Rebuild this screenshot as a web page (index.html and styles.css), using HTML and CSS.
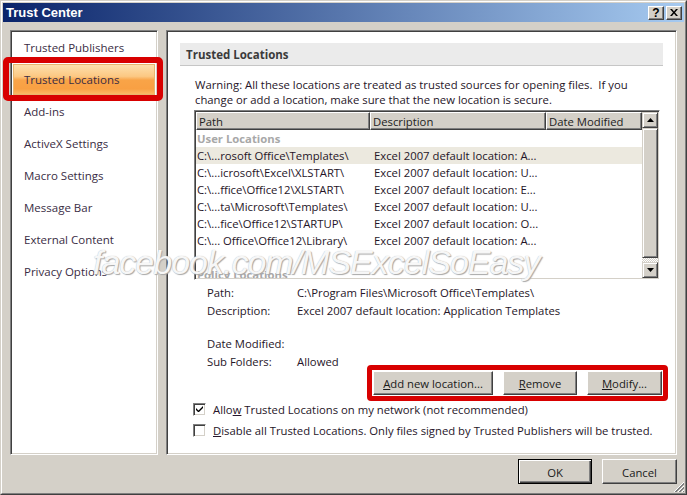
FILE: index.html
```html
<!DOCTYPE html>
<html>
<head>
<meta charset="utf-8">
<title>Trust Center</title>
<link rel="stylesheet" href="styles.css">
</head>
<body>
<div class="window">
  <div class="frame">
    <div class="titlebar">
      <span class="title">Trust Center</span>
      <div class="tbtns">
        <span class="tbtn q">?</span>
        <span class="tbtn x"><svg width="8" height="7" viewBox="0 0 8 7"><path d="M0 0h2l2 2.4 2-2.4h2l-3 3.5 3 3.5h-2l-2-2.4-2 2.4h-2l3-3.5z" fill="#000"/></svg></span>
      </div>
    </div>
    <div class="main">
      <div class="panels">
        <nav class="nav">
          <div class="nav-item">Trusted Publishers</div>
          <div class="nav-item sel">Trusted Locations</div>
          <div class="nav-item">Add-ins</div>
          <div class="nav-item">ActiveX Settings</div>
          <div class="nav-item">Macro Settings</div>
          <div class="nav-item">Message Bar</div>
          <div class="nav-item">External Content</div>
          <div class="nav-item">Privacy Options</div>
        </nav>
        <section class="content">
          <div class="section-head">Trusted Locations</div>
          <p class="warning">Warning: All these locations are treated as trusted sources for opening files.&nbsp; If you<br>change or add a location, make sure that the new location is secure.</p>
          <div class="list">
            <div class="list-body">
              <div class="list-head">
                <div class="hcell c-path">Path</div>
                <div class="hcell c-desc">Description</div>
                <div class="hcell c-date">Date Modified</div>
              </div>
              <div class="group">User Locations</div>
              <div class="row sel"><span class="c-path">C:\...rosoft Office\Templates\</span><span class="c-desc">Excel 2007 default location: A...</span></div>
              <div class="row"><span class="c-path">C:\...icrosoft\Excel\XLSTART\</span><span class="c-desc">Excel 2007 default location: U...</span></div>
              <div class="row"><span class="c-path">C:\...ffice\Office12\XLSTART\</span><span class="c-desc">Excel 2007 default location: E...</span></div>
              <div class="row"><span class="c-path">C:\...ta\Microsoft\Templates\</span><span class="c-desc">Excel 2007 default location: U...</span></div>
              <div class="row"><span class="c-path">C:\...fice\Office12\STARTUP\</span><span class="c-desc">Excel 2007 default location: O...</span></div>
              <div class="row"><span class="c-path">C:\... Office\Office12\Library\</span><span class="c-desc">Excel 2007 default location: A...</span></div>
              <div class="row"></div>
              <div class="group">Policy Locations</div>
            </div>
            <div class="vscroll">
              <div class="sbtn"><svg width="7" height="4" viewBox="0 0 7 4"><path d="M0 4L3.5 0 7 4z" fill="#000"/></svg></div>
              <div class="thumb"></div>
              <div class="track"></div>
              <div class="sbtn"><svg width="7" height="4" viewBox="0 0 7 4"><path d="M0 0L3.5 4 7 0z" fill="#000"/></svg></div>
            </div>
          </div>
          <div class="details">
            <div class="drow"><span class="dl">Path:</span><span>C:\Program Files\Microsoft Office\Templates\</span></div>
            <div class="drow"><span class="dl">Description:</span><span>Excel 2007 default location: Application Templates</span></div>
            <div class="drow spaced"><span class="dl">Date Modified:</span><span></span></div>
            <div class="drow"><span class="dl">Sub Folders:</span><span>Allowed</span></div>
          </div>
          <div class="actions">
            <div class="redbox">
              <button class="btn w-add"><u>A</u>dd new location...</button>
              <button class="btn w-rem"><u>R</u>emove</button>
              <button class="btn w-mod"><u>M</u>odify...</button>
            </div>
          </div>
          <div class="check">
            <span class="box"><svg width="7" height="7" viewBox="0 0 7 7"><path d="M0 2v2l2 2h1l4-4V0L2.5 4.5z" fill="#000"/></svg></span>
            <span>Allo<u>w</u> Trusted Locations on my network (not recommended)</span>
          </div>
          <div class="check">
            <span class="box"></span>
            <span><u>D</u>isable all Trusted Locations. Only files signed by Trusted Publishers will be trusted.</span>
          </div>
        </section>
      </div>
      <div class="footer">
        <button class="btn default">OK</button>
        <button class="btn">Cancel</button>
      </div>
    </div>
  </div>
  <div class="watermark">facebook.com/MSExcelSoEasy</div>
  <svg class="grip" width="12" height="12" viewBox="0 0 12 12">
    <path d="M11 1L1 11M11 5L5 11M11 9L9 11" stroke="#fff" stroke-width="1"/>
    <path d="M11 2L2 11M11 3L3 11M11 6L6 11M11 7L7 11M11 10L10 11" stroke="#808080" stroke-width="1"/>
  </svg>
</div>
</body>
</html>
```

FILE: styles.css
```css
* { box-sizing: border-box; }
html, body { margin: 0; padding: 0; }
body {
  width: 687px;
  height: 495px;
  overflow: hidden;
  background: #d4d0c8;
  font-family: "Open Sans", "Noto Sans", sans-serif;
  font-size: 11.3px;
  color: #261528;
}
.window {
  position: relative;
  width: 687px;
  height: 495px;
  background: #d4d0c8;
  border: 1px solid;
  border-color: #d4d0c8 #404040 #404040 #d4d0c8;
  display: flex;
}
.frame {
  flex: 1;
  display: flex;
  flex-direction: column;
  border: 1px solid;
  border-color: #fff #808080 #808080 #fff;
  padding: 1px;
}
.titlebar {
  height: 19px;
  flex: none;
  background: linear-gradient(to right, #0a246a, #a6caf0);
  display: flex;
  align-items: center;
  justify-content: space-between;
  padding: 0 2px;
}
.title {
  font-family: "Liberation Sans", sans-serif;
  font-weight: bold;
  font-size: 13px;
  color: #fff;
  padding-left: 1px;
}
.tbtns { display: flex; gap: 2px; }
.tbtn {
  width: 16px;
  height: 14px;
  background: #d4d0c8;
  border: 1px solid;
  border-color: #fff #404040 #404040 #fff;
  box-shadow: inset -1px -1px #808080;
  display: flex;
  align-items: center;
  justify-content: center;
  font-family: "Liberation Sans", sans-serif;
  font-weight: bold;
  font-size: 12px;
  line-height: 12px;
  color: #000;
}
.main {
  flex: 1;
  display: flex;
  flex-direction: column;
  padding: 8px 7px 0 7px;
}
.panels {
  height: 425px;
  flex: none;
  display: flex;
  gap: 8px;
}
.nav, .content {
  background: #fff;
  border: 1px solid;
  border-color: #808080 #fff #fff #808080;
  box-shadow: inset 1px 1px #404040, inset -1px -1px #d4d0c8;
}
.nav {
  width: 148px;
  flex: none;
  padding: 1px 2px;
  color: #3a2d44;
  font-size: 11.5px;
}
.nav-item {
  position: relative;
  height: 32px;
  line-height: 32px;
  padding-left: 11px;
  white-space: nowrap;
}
.nav-item.sel {
  background: linear-gradient(#fde2b0 0%, #fcc883 40%, #f9a448 52%, #f9a043 80%, #fbbd6c 100%);
  box-shadow: inset 0 0 0 1px #e8b66e;
  line-height: 31px;
  height: 31px;
  margin-bottom: 1px;
}
.nav-item.sel::after {
  content: "";
  position: absolute;
  left: -10px;
  right: -8px;
  top: -7px;
  bottom: -6px;
  border: 6px solid #d80000;
  border-radius: 5px;
}
.content {
  flex: 1;
  padding: 12px 13px 0 13px;
  display: flex;
  flex-direction: column;
}
.section-head {
  height: 23px;
  flex: none;
  background: #ebebeb;
  border-bottom: 1px solid #c6c6c6;
  padding: 1px 0 0 6px;
  line-height: 21px;
  font-weight: bold;
  font-size: 11.5px;
  color: #3b3b3b;
}
.warning {
  margin: 11px 0 0 15px;
  line-height: 15px;
  white-space: nowrap;
}
.list {
  margin: 3px 0 0 14px;
  width: 466px;
  height: 170px;
  flex: none;
  display: flex;
  border: 1px solid;
  border-color: #808080 #fff #fff #808080;
  box-shadow: inset 1px 1px #404040, inset -1px -1px #d4d0c8;
  padding: 1px;
  background: #fff;
}
.list-body {
  width: 446px;
  overflow: hidden;
}
.list-head {
  display: flex;
  height: 18px;
}
.hcell {
  background: #d4d0c8;
  border: 1px solid;
  border-color: #fff #404040 #404040 #fff;
  box-shadow: inset -1px -1px #808080;
  padding: 1px 0 0 2px;
  line-height: 15px;
  color: #222;
  white-space: nowrap;
}
.c-path { width: 174px; flex: none; }
.c-desc { width: 176px; flex: none; }
.c-date { width: 96px; flex: none; }
.row .c-path { padding-left: 1px; }
.row .c-desc { padding-left: 4px; }
.group {
  height: 17px;
  line-height: 18px;
  padding-left: 1px;
  font-weight: bold;
  color: #a8a8a8;
}
.row {
  display: flex;
  height: 17px;
  line-height: 18px;
  white-space: nowrap;
}
.row.sel { background: #ece9df; }
.vscroll {
  width: 16px;
  flex: none;
  display: flex;
  flex-direction: column;
}
.sbtn, .thumb {
  background: #d4d0c8;
  border: 1px solid;
  border-color: #d4d0c8 #404040 #404040 #d4d0c8;
  box-shadow: inset 1px 1px #fff, inset -1px -1px #808080;
}
.sbtn {
  height: 16px;
  flex: none;
  display: flex;
  align-items: center;
  justify-content: center;
}
.thumb { flex: 1; }
.track {
  height: 4px;
  flex: none;
  background: repeating-conic-gradient(#d4d0c8 0 25%, #fff 0 50%) 0 0 / 2px 2px;
}
.details {
  margin: 5px 0 0 27px;
  display: flex;
  flex-direction: column;
  gap: 2px;
}
.drow {
  display: flex;
  height: 16px;
  line-height: 16px;
  white-space: nowrap;
}
.drow.spaced { margin-top: 15px; }
.dl { width: 90px; flex: none; }
.actions {
  display: flex;
  justify-content: flex-end;
  margin: -5px -5px 0 0;
}
.redbox {
  display: flex;
  gap: 10px;
  padding: 1px;
  border: 5px solid #d80000;
  border-radius: 4px;
}
.btn {
  height: 24px;
  background: #d4d0c8;
  border: 1px solid;
  border-color: #fff #404040 #404040 #fff;
  box-shadow: inset -1px -1px #808080;
  font-family: "Open Sans", "Noto Sans", sans-serif;
  font-size: 11.3px;
  color: #1a1a1a;
  padding: 1px 0 0 0;
  white-space: nowrap;
}
.w-add { width: 120px; }
.w-rem { width: 74px; }
.w-mod { width: 75px; }
.check {
  display: flex;
  align-items: center;
  gap: 7px;
  height: 16px;
  margin-left: 13px;
  white-space: nowrap;
}
.check + .check { margin-top: 5px; }
.box {
  width: 13px;
  height: 13px;
  flex: none;
  background: #fff;
  border: 1px solid;
  border-color: #808080 #fff #fff #808080;
  box-shadow: inset 1px 1px #404040, inset -1px -1px #d4d0c8;
  display: flex;
  align-items: center;
  justify-content: center;
}
.footer {
  display: flex;
  justify-content: flex-end;
  gap: 10px;
  padding-top: 4px;
}
.footer .btn { width: 75px; height: 25px; }
.btn.default {
  width: 74px;
  border: 1px solid #000;
  box-shadow: inset 1px 1px #fff, inset -1px -1px #404040, inset -2px -2px #808080;
}
.watermark {
  position: absolute;
  left: 92px;
  top: 244px;
  font-family: "Liberation Sans", sans-serif;
  font-style: italic;
  font-size: 34px;
  line-height: 34px;
  letter-spacing: -1px;
  color: rgba(255, 255, 255, 0.92);
  text-shadow: 1px 1px 1px #a8a8a8, 0 0 1px #b0b0b0;
  white-space: nowrap;
  pointer-events: none;
}
.grip {
  position: absolute;
  right: 1px;
  bottom: 1px;
}
```
